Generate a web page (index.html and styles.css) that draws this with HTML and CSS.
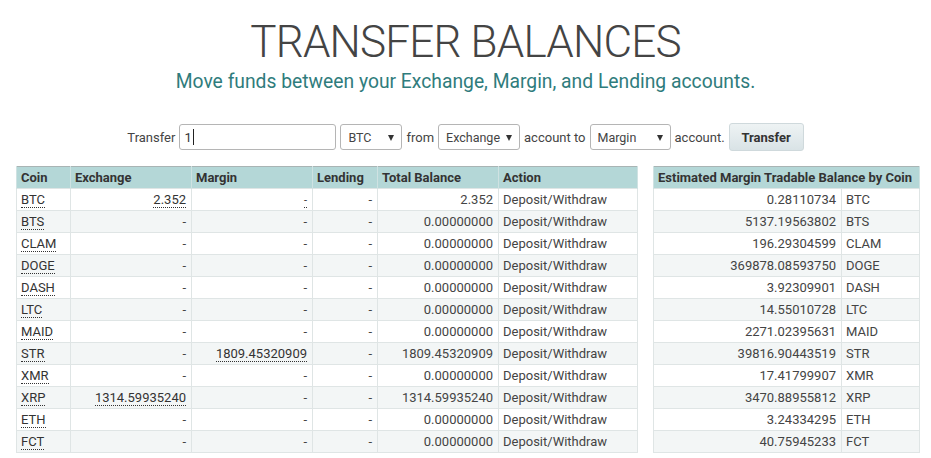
FILE: index.html
```html
<!DOCTYPE html>
<html>
<head>
<meta charset="utf-8">
<link rel="stylesheet" href="styles.css">
</head>
<body>
<div class="page">
  <header class="hero">
    <h1 class="title">TRANSFER BALANCES</h1>
    <p class="subtitle">Move funds between your Exchange, Margin, and Lending accounts.</p>
  </header>
  <form class="transfer-form">
    <span class="lbl">Transfer</span>
    <span class="amount"><span class="val">1</span><span class="caret"></span></span>
    <span class="sel sel-coin">BTC</span>
    <span class="lbl">from</span>
    <span class="sel sel-from">Exchange</span>
    <span class="lbl">account to</span>
    <span class="sel sel-to">Margin</span>
    <span class="lbl">account.</span>
    <button type="button" class="btn">Transfer</button>
  </form>
  <div class="tables">
    <table class="grid main">
      <colgroup>
        <col class="c-coin"><col class="c-ex"><col class="c-mar"><col class="c-len"><col class="c-tot"><col class="c-act">
      </colgroup>
      <thead>
        <tr><th>Coin</th><th>Exchange</th><th>Margin</th><th>Lending</th><th>Total Balance</th><th>Action</th></tr>
      </thead>
      <tbody>
        <tr><td><abbr>BTC</abbr></td><td class="num"><abbr>2.352</abbr></td><td class="num"><abbr class="tiny">-</abbr></td><td class="num">-</td><td class="num">2.352</td><td>Deposit/Withdraw</td></tr>
        <tr><td><abbr>BTS</abbr></td><td class="num">-</td><td class="num">-</td><td class="num">-</td><td class="num">0.00000000</td><td>Deposit/Withdraw</td></tr>
        <tr><td><abbr>CLAM</abbr></td><td class="num">-</td><td class="num">-</td><td class="num">-</td><td class="num">0.00000000</td><td>Deposit/Withdraw</td></tr>
        <tr><td><abbr>DOGE</abbr></td><td class="num">-</td><td class="num">-</td><td class="num">-</td><td class="num">0.00000000</td><td>Deposit/Withdraw</td></tr>
        <tr><td><abbr>DASH</abbr></td><td class="num">-</td><td class="num">-</td><td class="num">-</td><td class="num">0.00000000</td><td>Deposit/Withdraw</td></tr>
        <tr><td><abbr>LTC</abbr></td><td class="num">-</td><td class="num">-</td><td class="num">-</td><td class="num">0.00000000</td><td>Deposit/Withdraw</td></tr>
        <tr><td><abbr>MAID</abbr></td><td class="num">-</td><td class="num">-</td><td class="num">-</td><td class="num">0.00000000</td><td>Deposit/Withdraw</td></tr>
        <tr><td><abbr>STR</abbr></td><td class="num">-</td><td class="num"><abbr>1809.45320909</abbr></td><td class="num">-</td><td class="num">1809.45320909</td><td>Deposit/Withdraw</td></tr>
        <tr><td><abbr>XMR</abbr></td><td class="num">-</td><td class="num">-</td><td class="num">-</td><td class="num">0.00000000</td><td>Deposit/Withdraw</td></tr>
        <tr><td><abbr>XRP</abbr></td><td class="num"><abbr>1314.59935240</abbr></td><td class="num">-</td><td class="num">-</td><td class="num">1314.59935240</td><td>Deposit/Withdraw</td></tr>
        <tr><td><abbr>ETH</abbr></td><td class="num">-</td><td class="num">-</td><td class="num">-</td><td class="num">0.00000000</td><td>Deposit/Withdraw</td></tr>
        <tr><td><abbr>FCT</abbr></td><td class="num">-</td><td class="num">-</td><td class="num">-</td><td class="num">0.00000000</td><td>Deposit/Withdraw</td></tr>
      </tbody>
    </table>
    <table class="grid side">
      <colgroup><col class="c-bal"><col class="c-sym"></colgroup>
      <thead>
        <tr><th colspan="2">Estimated Margin Tradable Balance by Coin</th></tr>
      </thead>
      <tbody>
        <tr><td class="num">0.28110734</td><td>BTC</td></tr>
        <tr><td class="num">5137.19563802</td><td>BTS</td></tr>
        <tr><td class="num">196.29304599</td><td>CLAM</td></tr>
        <tr><td class="num">369878.08593750</td><td>DOGE</td></tr>
        <tr><td class="num">3.92309901</td><td>DASH</td></tr>
        <tr><td class="num">14.55010728</td><td>LTC</td></tr>
        <tr><td class="num">2271.02395631</td><td>MAID</td></tr>
        <tr><td class="num">39816.90443519</td><td>STR</td></tr>
        <tr><td class="num">17.41799907</td><td>XMR</td></tr>
        <tr><td class="num">3470.88955812</td><td>XRP</td></tr>
        <tr><td class="num">3.24334295</td><td>ETH</td></tr>
        <tr><td class="num">40.75945233</td><td>FCT</td></tr>
      </tbody>
    </table>
  </div>
</div>
</body>
</html>
```

FILE: styles.css
```css
* { box-sizing: border-box; }
html, body { margin: 0; padding: 0; background: #fff; }
body {
  font-family: Roboto, "Liberation Sans", Arial, sans-serif;
  color: #444;
  font-size: 13px;
}
.page { padding: 18px 0 0; }
.hero { text-align: center; }
.title {
  margin: 0;
  font-size: 44px;
  line-height: 48px;
  font-weight: 300;
  color: #444;
  letter-spacing: -0.8px;
}
.subtitle {
  margin: 4px 0 0;
  font-size: 19.3px;
  line-height: 24px;
  color: #2f7c7c;
}
.transfer-form {
  margin-top: 29px;
  display: flex;
  justify-content: center;
  align-items: center;
  gap: 4px;
  height: 28px;
  color: #444;
}
.lbl { font-size: 13px; }
.amount {
  display: inline-flex;
  align-items: center;
  width: 157px;
  height: 26px;
  border: 1px solid #b5b5b5;
  border-radius: 3px;
  padding-left: 4px;
  font-size: 13px;
  color: #333;
  background: #fff;
}
.caret { display: inline-block; width: 1px; height: 16px; background: #222; margin-left: 1px; }
.sel {
  position: relative;
  display: inline-flex;
  align-items: center;
  height: 26px;
  border: 1px solid #b5b5b5;
  border-radius: 3px;
  padding-left: 7px;
  font-size: 12.5px;
  color: #444;
  background: #fff;
}
.sel::after {
  content: "";
  position: absolute;
  right: 7px;
  top: 10px;
  border-left: 3px solid transparent;
  border-right: 3px solid transparent;
  border-top: 6px solid #333;
}
.sel-coin { width: 62px; }
.sel-from { width: 82px; }
.sel-to { width: 81px; }
.btn {
  width: 75px;
  height: 28px;
  border: 1px solid #cfd9dc;
  border-radius: 3px;
  background: linear-gradient(#eef3f4, #d9e3e6);
  font-family: inherit;
  font-size: 13px;
  font-weight: 700;
  color: #333;
  padding: 0;
}
.tables {
  margin-top: 15px;
  display: flex;
  gap: 15px;
  padding-left: 16px;
  align-items: flex-start;
}
.grid {
  border-collapse: collapse;
  table-layout: fixed;
  border: 1px solid #a9b4b4;
}
.grid th {
  background: #b4d7d7;
  color: #333;
  font-weight: 700;
  text-align: left;
  height: 22px;
  padding: 0 4px;
  border: 1px solid #cfe2e2;
  border-top: 0;
  border-bottom: 0;
  white-space: nowrap;
}
.grid td {
  height: 22px;
  padding: 0 4px;
  border: 1px solid #dfe5e5;
  white-space: nowrap;
  color: #444;
}
.grid tbody tr:nth-child(even) td { background: #f3f6f6; }
.grid td.num { text-align: right; padding-right: 5px; }
abbr {
  text-decoration: none;
  border-bottom: 1px dotted #333;
  color: #333;
}
abbr.tiny { font-size: 11px; }
.main { width: 621px; }
.c-coin { width: 54px; }
.c-ex { width: 121px; }
.c-mar { width: 121px; }
.c-len { width: 65px; }
.c-tot { width: 121px; }
.c-act { width: 139px; }
.side { width: 266px; }
.c-bal { width: 188px; }
.c-sym { width: 78px; }
```
